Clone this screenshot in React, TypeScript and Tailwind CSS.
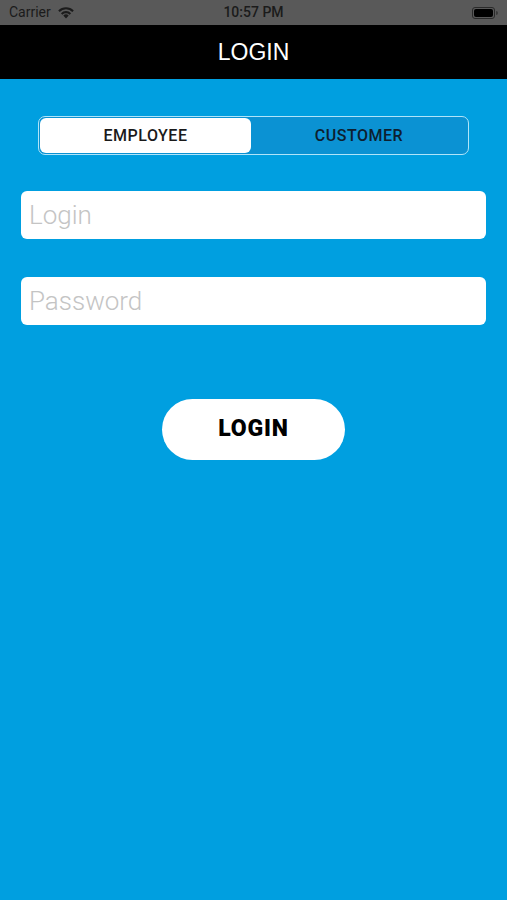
import React from "react";

export default function App() {
  return (
    <div className="w-[507px] h-[900px] bg-[#009fe0] flex flex-col" style={{ fontFamily: "Roboto, 'Liberation Sans', sans-serif" }}>
      <div className="h-[25px] bg-[#595959] flex items-center justify-between px-[9px] text-[#1b1b1b] text-[14px] relative">
        <div className="flex items-center gap-[6px]">
          <span>Carrier</span>
          <svg width="18" height="13" viewBox="0 0 18 13">
            <path d="M9 12.5 L6.3 9.6 A4 4 0 0 1 11.7 9.6 Z" fill="#1b1b1b" />
            <path d="M3.9 7.2 A7.3 7.3 0 0 1 14.1 7.2 L12.6 8.7 A5.2 5.2 0 0 0 5.4 8.7 Z" fill="#1b1b1b" />
            <path d="M1.2 4.4 A11.2 11.2 0 0 1 16.8 4.4 L15.3 5.9 A9.1 9.1 0 0 0 2.7 5.9 Z" fill="#1b1b1b" />
          </svg>
        </div>
        <span className="absolute left-1/2 -translate-x-1/2 font-medium text-[14px]">10:57 PM</span>
        <div className="flex items-center">
          <div className="w-[23px] h-[12px] rounded-[3px] border border-[#2a2a2a] p-[1px]">
            <div className="w-full h-full bg-[#000] rounded-[2px]" />
          </div>
          <div className="w-[2px] h-[4px] bg-[#3a3a3a] rounded-r-sm ml-[1px]" />
        </div>
      </div>
      <div className="h-[54px] bg-black flex items-center justify-center text-white text-[23px]" style={{ fontFamily: "'Liberation Sans', Arial, sans-serif" }}>
        LOGIN
      </div>
      <div className="flex flex-col px-[21px] pt-[37px]">
        <div className="mx-[17px] h-[39px] rounded-[7px] border-[1.5px] border-[#b0e4f9] bg-[#0b92d3] p-[1px] flex">
          <div className="w-[211px] bg-white rounded-[6px] flex items-center justify-center text-[16px] font-medium text-[#1a1a1a] tracking-[0.5px]">
            EMPLOYEE
          </div>
          <div className="flex-1 flex items-center justify-center text-[16px] font-medium text-[#0d2030] tracking-[0.5px]">
            CUSTOMER
          </div>
        </div>
        <div className="mt-[36px] h-[48px] bg-white rounded-[6px] flex items-center px-[8px] text-[26px] text-[#c4c4c4] font-light">
          Login
        </div>
        <div className="mt-[38px] h-[48px] bg-white rounded-[6px] flex items-center px-[8px] text-[26px] text-[#c4c4c4] font-light">
          Password
        </div>
        <div className="mt-[74px] self-center w-[183px] h-[61px] rounded-full bg-white flex items-center justify-center text-[23px] font-black text-black tracking-[0.8px]">
          LOGIN
        </div>
      </div>
    </div>
  );
}
